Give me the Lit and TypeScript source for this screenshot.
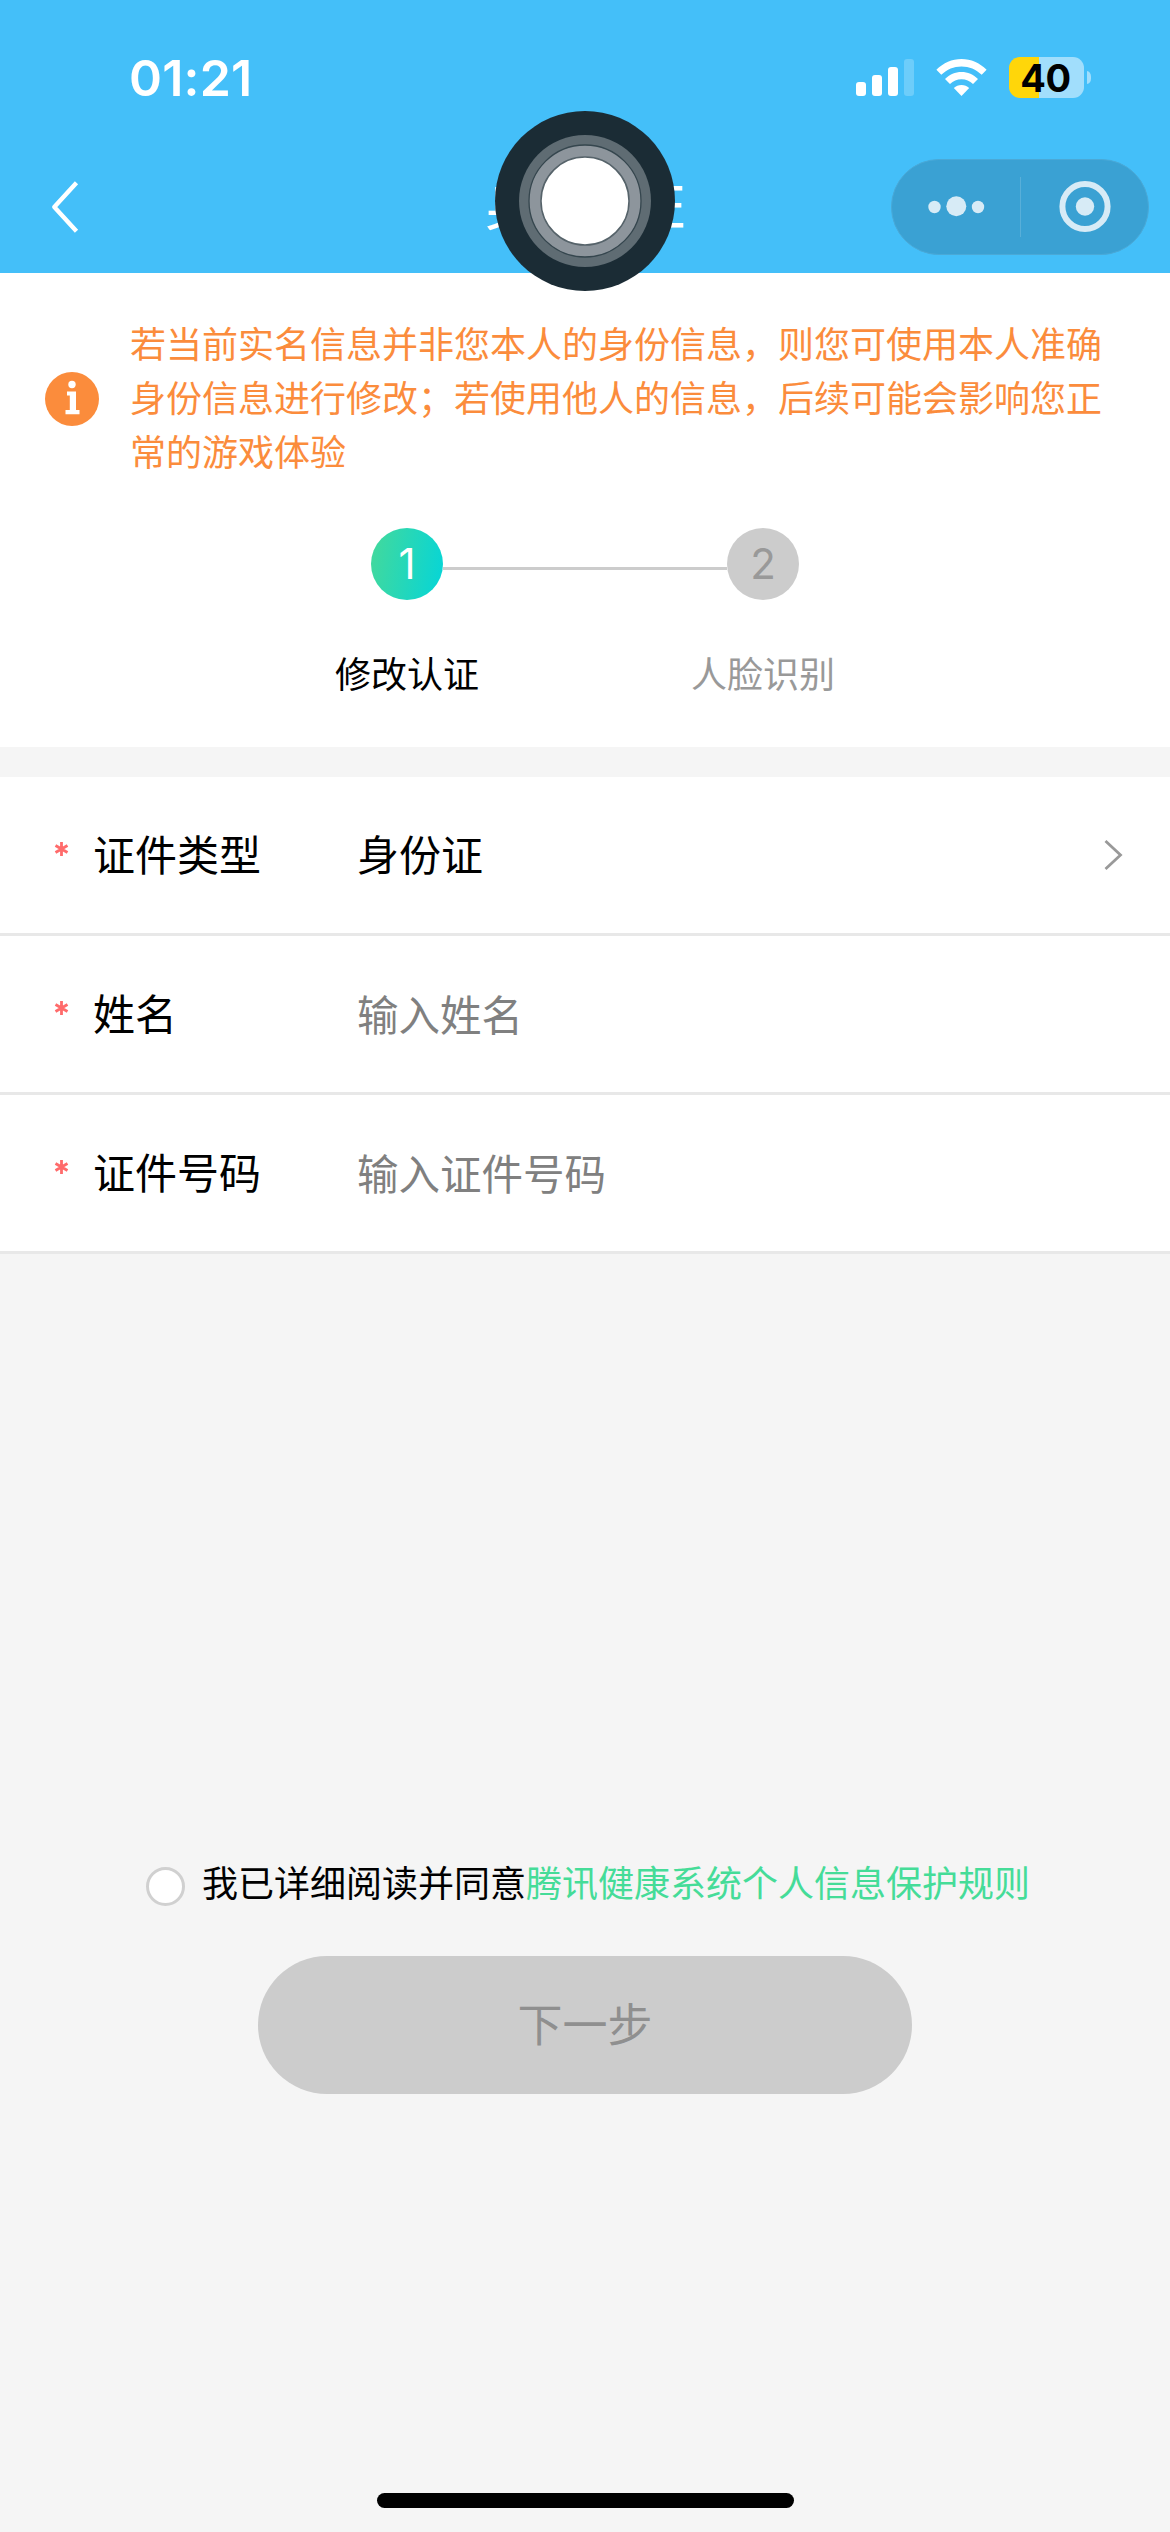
import { LitElement, html, css } from "lit";
import { customElement, property } from "lit/decorators.js";

@customElement("status-bar")
class StatusBar extends LitElement {
  static styles = css`
    :host { display: flex; align-items: center; height: 155px; padding: 0 79px 0 129px; box-sizing: border-box; color: #fff; }
    .time { font: 600 50px/60px Inter, "Liberation Sans", sans-serif; letter-spacing: 0.2px; flex: 1; }
    .icon { display: block; }
    .wifi { margin: 0 22px; }
    .battery { display: flex; align-items: center; gap: 3px; }
    .cell {
      width: 75px; height: 41px; border-radius: 11px; color: #000; text-align: center;
      background: linear-gradient(90deg, #ffd60a 30px, #a1defc 30px);
      font: 650 38px/42px Inter, "Liberation Sans", sans-serif; letter-spacing: -0.4px; text-indent: -2px;
    }
    .nub { width: 4px; height: 13px; border-radius: 0 5px 5px 0 / 0 7px 7px 0; background: #a1defc; }
  `;
  render() {
    return html`
      <div class="time">01:21</div>
      <svg class="icon" width="58" height="37" viewBox="0 0 58 37" fill="#fff">
        <rect x="0" y="23" width="10" height="14" rx="3"/>
        <rect x="16" y="16" width="10" height="21" rx="3"/>
        <rect x="32" y="8" width="10" height="29" rx="3"/>
        <rect x="48" y="0" width="10" height="37" rx="3" fill-opacity=".22"/>
      </svg>
      <svg class="icon wifi" width="51" height="37" viewBox="0 0 51 37" fill="#fff">
        <path d="M0.4 10.8C7.4 3.8 16 0 25.5 0s18.100 3.800 25.100 10.800l-4.900 5C40 10.200 33.200 7.400 25.500 7.400S11 10.200 5.300 15.800z"/>
        <path d="M9 20c4.600-4.600 10.200-7 16.500-7s11.900 2.400 16.500 7l-5 5c-3.200-3.100-7-4.700-11.500-4.700S17.200 21.900 14 25z"/>
        <path d="M17.800 29.100c2.200-2.100 4.700-3.100 7.700-3.100s5.500 1 7.700 3.100l-7.700 7.900z"/>
      </svg>
      <div class="battery"><div class="cell">40</div><div class="nub"></div></div>
    `;
  }
}

@customElement("nav-bar")
class NavBar extends LitElement {
  static styles = css`
    :host { display: grid; grid-template-columns: 258px 1fr 258px; align-items: center; height: 96px; margin: 4px 21px 0; }
    .back { display: block; margin-left: 29px; }
    .title { text-align: center; color: #fff; font: 500 50px/72px "Noto Sans CJK SC", sans-serif; padding-bottom: 8px; }
    .capsule {
      display: flex; align-items: center; box-sizing: border-box; height: 96px; border-radius: 48px;
      background: #3aa1d3; border: 1px solid #4aa9d7;
    }
    .glyph { display: block; }
  `;
  render() {
    return html`
      <svg class="back" width="30" height="54" viewBox="0 0 30 54" fill="none" stroke="#fff" stroke-width="4.4" stroke-linejoin="round">
        <path d="M26.500 2.800L4.300 27l22.200 24.200" />
      </svg>
      <div class="title">身份认证</div>
      <div class="capsule">
        <svg class="glyph" width="256" height="94" viewBox="0 0 256 94" fill="#d7ebf6">
          <circle cx="42.500" cy="47" r="6.200"/><circle cx="64.300" cy="46.300" r="10"/><circle cx="86" cy="47" r="6.200"/>
          <path d="M128 17h1v60h-1z" fill="#58afd9"/>
          <circle cx="193" cy="46.500" r="22.600" fill="none" stroke="#d7ebf6" stroke-width="6"/>
          <circle cx="193" cy="46.500" r="9.200"/>
        </svg>
      </div>
    `;
  }
}

@customElement("form-row")
class FormRow extends LitElement {
  @property() label = "";
  @property() value = "";
  @property() hint = "";
  static styles = css`
    :host {
      display: flex; align-items: center; height: 159px; box-sizing: border-box; padding: 0 47px 0 54px;
      background: #fff; border-bottom: 3px solid #e8e8e8; color: #000; font: 400 42px/60px "Noto Sans CJK SC", sans-serif;
    }
    .star { width: 39px; display: flex; margin-top: -12px; }
    .label { width: 264px; margin-top: -4px; }
    .value { flex: 1; margin-top: -4px; }
    .hint { flex: 1; margin-top: -2px; color: #808080; font-size: 41.500px; }
  `;
  render() {
    return html`
      <div class="star">
        <svg width="15" height="16" viewBox="0 0 15 16" stroke="#ff6b6b" stroke-width="2.800">
          <path d="M7.500 1v14M1.500 4.500l12 7M1.500 11.500l12-7"/>
        </svg>
      </div>
      <div class="label">${this.label}</div>
      ${this.value
        ? html`<div class="value">${this.value}</div>
            <svg width="20" height="32" viewBox="0 0 20 32" fill="none" stroke="#999" stroke-width="2.800"><path d="M2.500 2l15 14-15 14"/></svg>`
        : html`<div class="hint">${this.hint}</div>`}
    `;
  }
}

@customElement("app-root")
class AppRoot extends LitElement {
  static styles = css`
    :host {
      display: flex; flex-direction: column; position: relative; width: 1170px; height: 2532px;
      background: #f5f5f5; color: #000; font: 400 36px/54px "Noto Sans CJK SC", sans-serif; overflow: hidden;
    }
    .header { height: 273px; background: #44bff9; }
    .intro { background: #fff; height: 474px; box-sizing: border-box; padding-top: 42px; margin-bottom: 30px; }
    .notice { display: flex; align-items: center; padding: 0 45px; gap: 31px; color: #fb8c3c; }
    .info { flex: none; margin-top: 6px; }
    .message { width: 980px; }
    .track { display: flex; justify-content: center; align-items: center; margin-top: 51px; }
    .dot {
      width: 72px; height: 72px; border-radius: 50%; background: #ccc; color: #999; text-align: center;
      font: 400 42px/72px Inter, "Liberation Sans", sans-serif;
    }
    .dot.current { background: linear-gradient(100deg, #45d99a, #04d5d9); color: #fff; }
    .link { width: 284px; height: 3px; margin-top: 9px; background: #ccc; }
    .names { display: flex; justify-content: center; gap: 212px; margin-top: 45px; }
    .pending { color: #999; }
    .agree { display: flex; align-items: center; margin-top: 600px; padding-left: 146px; }
    .check { width: 39px; height: 39px; box-sizing: border-box; border: 3px solid #d0d0d0; border-radius: 50%; background: #fff; margin: 11px 17px 0 0; }
    .rules { color: #45dc98; }
    .next {
      align-self: center; width: 654px; height: 138px; margin-top: 48px; border-radius: 69px;
      background: #ccc; color: #8f8f8f; text-align: center; font-size: 45px; line-height: 133px;
    }
    .home { align-self: center; width: 417px; height: 15px; border-radius: 8px; background: #000; margin: auto 0 24px 1px; }
    .touch { position: absolute; left: 495px; top: 111px; }
  `;
  render() {
    return html`
      <div class="header"><status-bar></status-bar><nav-bar></nav-bar></div>
      <div class="intro">
        <div class="notice">
          <svg class="info" width="54" height="54" viewBox="0 0 54 54">
            <circle cx="27" cy="27" r="27" fill="#fb8c3c"/>
            <circle cx="27" cy="12.500" r="3.700" fill="#fff"/>
            <path d="M22 19.500h9V38H34.500v4.300H20.500v-4.300h4.300V23.500H22z" fill="#fff"/>
          </svg>
          <div class="message">若当前实名信息并非您本人的身份信息，则您可使用本人准确身份信息进行修改；若使用他人的信息，后续可能会影响您正常的游戏体验</div>
        </div>
        <div class="track"><div class="dot current">1</div><div class="link"></div><div class="dot">2</div></div>
        <div class="names"><div>修改认证</div><div class="pending">人脸识别</div></div>
      </div>
      <form-row label="证件类型" value="身份证"></form-row>
      <form-row label="姓名" hint="输入姓名"></form-row>
      <form-row label="证件号码" hint="输入证件号码"></form-row>
      <div class="agree"><div class="check"></div><div>我已详细阅读并同意<span class="rules">腾讯健康系统个人信息保护规则</span></div></div>
      <div class="next">下一步</div>
      <div class="home"></div>
      <svg class="touch" width="180" height="180" viewBox="0 0 180 180">
        <circle cx="90" cy="90" r="90" fill="#1b2c35"/>
        <circle cx="90" cy="90" r="66" fill="#5f6c73"/>
        <circle cx="90" cy="90" r="56" fill="#8d959c" stroke="#35464e" stroke-width="1.300"/>
        <circle cx="90" cy="90" r="44" fill="#fff" stroke="#56636a" stroke-width="1.500"/>
      </svg>
    `;
  }
}
